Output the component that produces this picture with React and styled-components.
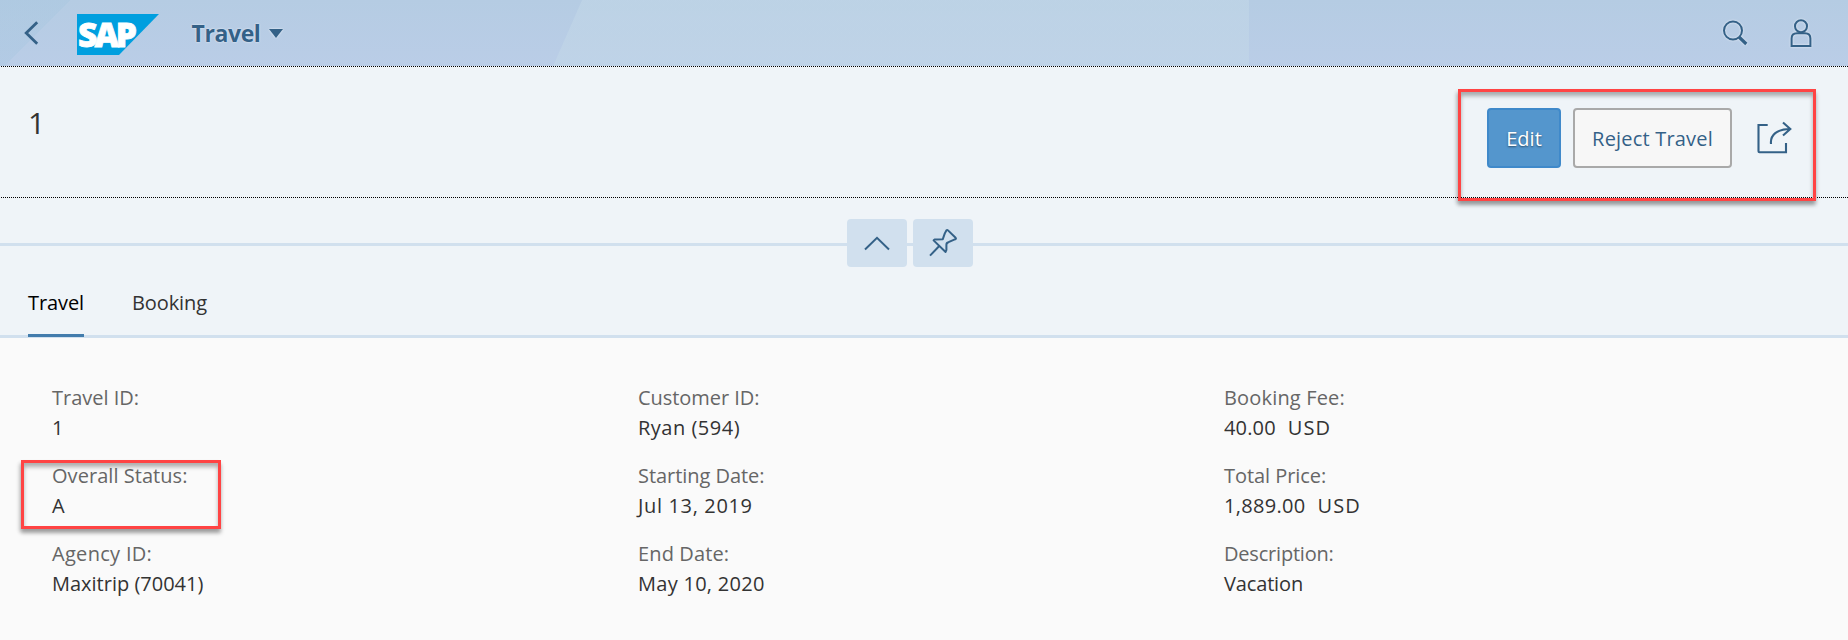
import React from "react";
import styled, { createGlobalStyle } from "styled-components";

const GlobalStyle = createGlobalStyle`
  *, *::before, *::after { box-sizing: border-box; }
  body { margin: 0; background: #fafafa; }
`;

const Page = styled.div`
  width: 100%;
  min-height: 640px;
  overflow: hidden;
  background: #fafafa;
  color: #333;
  font-family: "Open Sans", "Noto Sans", sans-serif;
  font-size: 20px;
  line-height: 30px;
`;

const Shell = styled.header`
  display: flex;
  align-items: center;
  height: 66px;
  padding: 0 36px 0 24px;
  color: #346187;
  background:
    linear-gradient(135deg, rgba(160, 196, 222, 0.28) 0 49.5px, transparent 50px),
    linear-gradient(113.7deg, transparent 532.5px, rgba(196, 217, 232, 0.5) 533.5px) 0 0 / 1249px 100% no-repeat,
    linear-gradient(#b5cce3, #bacde7);
`;

const BackButton = styled.button`
  display: flex;
  margin: 0;
  padding: 0;
  border: 0;
  background: none;
  color: inherit;
`;

const Icon = styled.svg`
  display: block;
  flex: none;
  fill: none;
  stroke: #346187;
  stroke-width: ${(p) => p.$weight || 2};
  filter: ${(p) => (p.$glow ? "drop-shadow(0 0 1px rgba(255, 255, 255, 0.7))" : "none")};
`;

const Logo = styled.svg`
  display: block;
  overflow: visible;
  margin: 2px 0 0 37px;
`;

const LogoText = styled.text`
  font-family: "Open Sans", "Liberation Sans", sans-serif;
  font-weight: 800;
  font-size: 33.5px;
  fill: #fff;
  stroke: #fff;
  stroke-width: 0.8;
`;

const AppMenu = styled.div`
  display: flex;
  align-items: center;
  gap: 9px;
  margin-left: 32.5px;
  font-size: 23px;
  font-weight: 700;
  letter-spacing: -0.4px;
  text-shadow: 0 0 2px rgba(255, 255, 255, 0.9);
`;

const Caret = styled.span`
  border: 7px solid transparent;
  border-top: 9px solid #346187;
  border-bottom: 0;
  filter: drop-shadow(0 0 1px rgba(255, 255, 255, 0.8));
`;

const ShellActions = styled.div`
  display: flex;
  align-items: center;
  gap: 42px;
  margin-left: auto;
`;

const DottedRule = styled.div`
  height: 1px;
  background: repeating-linear-gradient(90deg, #eff4f9 0 1px, #000 1px 2px);
`;

const TitleBar = styled.section`
  display: flex;
  justify-content: space-between;
  height: 130px;
  padding: 22px 32px 0 28px;
  background: #eff4f8;
`;

const Title = styled.h1`
  margin: 12px 0 0;
  font-size: 30px;
  font-weight: 400;
  line-height: 44px;
`;

const Highlight = styled.div`
  position: relative;
  z-index: 1;
  border: 3px solid #ff4444;
  box-shadow: 0 4px 4px rgba(0, 0, 0, 0.3), inset 0 4px 4px rgba(0, 0, 0, 0.3),
    -2px 3px 4px rgba(0, 0, 0, 0.12);
`;

const ActionGroup = styled(Highlight)`
  display: flex;
  align-items: flex-start;
  width: 358px;
  height: 112px;
  padding: 16px 0 0 26px;
`;

const Button = styled.button`
  flex: none;
  width: ${(p) => p.$width}px;
  height: 60px;
  margin: 0 12px 0 0;
  padding: 2px 0 0;
  border: 2px solid ${(p) => (p.$primary ? "#3f89ca" : "#a9a9a9")};
  border-radius: 4px;
  background: ${(p) => (p.$primary ? "#5496cd" : "#f7f7f7")};
  color: ${(p) => (p.$primary ? "#fff" : "#346187")};
  font: inherit;
  letter-spacing: ${(p) => p.$tracking || 0}px;
  text-shadow: ${(p) => (p.$primary ? "0 1px 2px rgba(0, 0, 0, 0.5)" : "0 0 1px #fff")};
`;

const ShareButton = styled.button`
  display: flex;
  margin: 12px 0 0 13px;
  padding: 0;
  border: 0;
  background: none;
`;

const HeaderToggle = styled.div`
  display: flex;
  justify-content: center;
  gap: 6px;
  height: 69px;
  padding: 21px 28px 0 0;
  background: linear-gradient(#d1e0ee, #d1e0ee) 0 45px / 100% 3px no-repeat #eff4f8;
`;

const ToggleButton = styled.button`
  display: flex;
  align-items: center;
  justify-content: center;
  width: 60px;
  height: 48px;
  padding: 0;
  border: 0;
  border-radius: 4px;
  background: #d1e0ee;
`;

const Tabs = styled.nav`
  display: flex;
  gap: 48px;
  height: 71px;
  padding: 21px 28px 0;
  border-bottom: 3px solid #d1e0ee;
  background: #eff4f8;
`;

const Tab = styled.a`
  height: 49px;
  letter-spacing: -0.1px;
  color: ${(p) => (p.$active ? "#000" : "#333")};
  border-bottom: ${(p) => (p.$active ? "3px solid #427cac" : "0")};
`;

const Details = styled.main`
  display: grid;
  grid-template-columns: 586px 586px 1fr;
  padding: 45px 0 0 52px;
`;

const Column = styled.dl`
  display: flex;
  flex-direction: column;
  gap: 18px;
  margin: 0;
`;

const Field = styled.div`
  position: relative;
  height: 60px;
  white-space: nowrap;
`;

const Label = styled.dt`
  color: #666;
  letter-spacing: ${(p) => p.$tracking || 0}px;
`;

const Value = styled.dd`
  display: flex;
  gap: 12px;
  margin: 0;
  letter-spacing: ${(p) => p.$tracking || 0}px;
`;

const Unit = styled.span`
  letter-spacing: 1.1px;
`;

const FieldHighlight = styled(Highlight)`
  position: absolute;
  left: -31px;
  top: -1px;
  width: 200px;
  height: 69px;
`;

const columns = [
  [
    { label: "Travel ID:", value: "1" },
    { label: "Overall Status:", value: "A", labelTracking: 0.05, highlighted: true },
    { label: "Agency ID:", value: "Maxitrip (70041)", labelTracking: 0.3 },
  ],
  [
    { label: "Customer ID:", value: "Ryan (594)", labelTracking: -0.05, valueTracking: 0.5 },
    { label: "Starting Date:", value: "Jul 13, 2019", labelTracking: -0.05, valueTracking: 0.65 },
    { label: "End Date:", value: "May 10, 2020", labelTracking: 0.13, valueTracking: 0.28 },
  ],
  [
    { label: "Booking Fee:", value: "40.00", unit: "USD", labelTracking: 0.17, valueTracking: 0.15 },
    { label: "Total Price:", value: "1,889.00", unit: "USD", labelTracking: -0.05, valueTracking: 0.3 },
    { label: "Description:", value: "Vacation", labelTracking: -0.2, valueTracking: -0.15 },
  ],
];

export default function App() {
  return (
    <Page>
      <GlobalStyle />
      <Shell>
        <BackButton aria-label="Back">
          <Icon width="16" height="26" viewBox="0 0 16 26" $weight={2.8}>
            <path d="M13.2 2.2 2.2 13l11 10.8" />
          </Icon>
        </BackButton>
        <Logo width="82" height="41" viewBox="0 0 82 41" role="img">
          <path d="M0 0h82L42 41H0z" fill="#009fdf" />
          <LogoText x="1" y="33" textLength="59" lengthAdjust="spacing">SAP</LogoText>
        </Logo>
        <AppMenu>
          Travel
          <Caret />
        </AppMenu>
        <ShellActions>
          <Icon width="26" height="26" viewBox="0 0 26 26" $glow>
            <circle cx="11" cy="10.5" r="9" />
            <path d="M17 17l7.3 7" strokeWidth="3.2" />
          </Icon>
          <Icon width="22" height="28" viewBox="0 0 22 28" $glow>
            <circle cx="11" cy="7.3" r="6" />
            <path d="M1.6 27V19.5Q1.6 14.2 7 14.2H15Q20.4 14.2 20.4 19.5V27Z" />
          </Icon>
        </ShellActions>
      </Shell>
      <DottedRule />
      <TitleBar>
        <Title>1</Title>
        <ActionGroup>
          <Button $primary $width={74}>Edit</Button>
          <Button $width={159} $tracking={0.19}>Reject Travel</Button>
          <ShareButton aria-label="Share">
            <Icon width="36" height="34" viewBox="0 0 36 34" $weight={2.1}>
              <path d="M10.7 5H1.5V31.3q0 1 1 1H29V23" />
              <path d="M14 24C13 15 20 9 33 9M26 2.5L33.3 9 26 15.5" />
            </Icon>
          </ShareButton>
        </ActionGroup>
      </TitleBar>
      <DottedRule />
      <HeaderToggle>
        <ToggleButton aria-label="Collapse header">
          <Icon width="26" height="16" viewBox="0 0 26 16">
            <path d="M1 14.5 13 2.8l12 11.7" />
          </Icon>
        </ToggleButton>
        <ToggleButton aria-label="Pin header">
          <Icon width="30" height="30" viewBox="0 0 30 30" strokeLinejoin="round">
            <path d="M18.5 2.2Q19.2 1.6 20 2.4L27.6 9.8Q28.4 10.8 27.4 11.2L20.5 14.2Q18.2 14.8 18.4 17V22L17.6 24 5.6 12.4 7 11.4 14.8 11.2 16.8 5.4Z" />
            <path d="M11.5 17.8 2 27.6" />
          </Icon>
        </ToggleButton>
      </HeaderToggle>
      <Tabs>
        <Tab $active>Travel</Tab>
        <Tab>Booking</Tab>
      </Tabs>
      <Details>
        {columns.map((fields, i) => (
          <Column key={i}>
            {fields.map((f) => (
              <Field key={f.label}>
                <Label $tracking={f.labelTracking}>{f.label}</Label>
                <Value $tracking={f.valueTracking}>
                  {f.value}
                  {f.unit && <Unit>{f.unit}</Unit>}
                </Value>
                {f.highlighted && <FieldHighlight as="span" />}
              </Field>
            ))}
          </Column>
        ))}
      </Details>
    </Page>
  );
}
